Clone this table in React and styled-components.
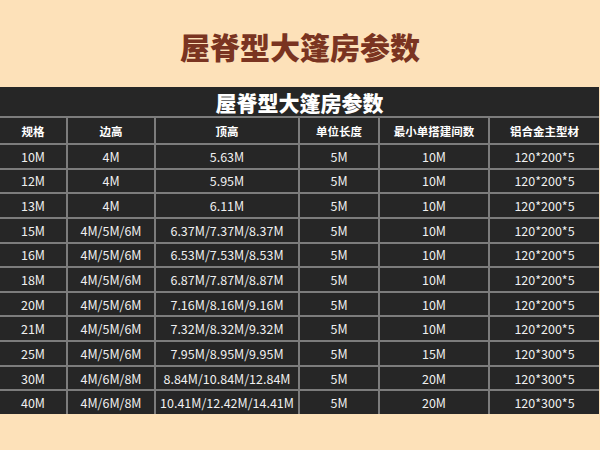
import React from "react";
import styled, { createGlobalStyle } from "styled-components";

const Global = createGlobalStyle`
  html, body { margin: 0; padding: 0; background: #fde1b9; }
  body { font-family: "Noto Sans CJK SC", "Noto Sans", sans-serif; }
`;

const Page = styled.div`
  width: 600px;
  height: 450px;
  background: #fde1b9;
  display: flex;
  flex-direction: column;
  overflow: hidden;
`;

const Heading = styled.h1`
  margin: 0;
  height: 87px;
  display: flex;
  align-items: center;
  justify-content: center;
  font-size: 30px;
  font-weight: 900;
  color: #7a3421;
  letter-spacing: 0px;
  padding-top: 4px;
  box-sizing: border-box;
`;

const Table = styled.div`
  width: 599px;
  background: #262626;
  display: flex;
  flex-direction: column;
`;

const Caption = styled.div`
  height: 29px;
  display: flex;
  align-items: center;
  justify-content: center;
  color: #ffffff;
  font-size: 21px;
  font-weight: 900;
`;

const Grid = styled.div`
  display: grid;
  grid-template-columns: 66px 86px 142px 78px 108px 1fr;
  grid-template-rows: 25px repeat(11, 1fr);
  gap: 2px;
  padding-top: 2px;
  height: 298px;
  box-sizing: border-box;
  background: #7c7c7c;
`;

const Cell = styled.div`
  background: #262626;
  color: ${(p) => (p.$head ? "#ffffff" : "#f0f0f0")};
  font-size: ${(p) => (p.$head ? "11.5px" : "12.5px")};
  font-weight: ${(p) => (p.$head ? 700 : 400)};
  display: flex;
  align-items: center;
  justify-content: center;
  white-space: nowrap;
`;

const head = ["规格", "边高", "顶高", "单位长度", "最小单搭建间数", "铝合金主型材"];
const rows = [
  ["10M", "4M", "5.63M", "5M", "10M", "120*200*5"],
  ["12M", "4M", "5.95M", "5M", "10M", "120*200*5"],
  ["13M", "4M", "6.11M", "5M", "10M", "120*200*5"],
  ["15M", "4M/5M/6M", "6.37M/7.37M/8.37M", "5M", "10M", "120*200*5"],
  ["16M", "4M/5M/6M", "6.53M/7.53M/8.53M", "5M", "10M", "120*200*5"],
  ["18M", "4M/5M/6M", "6.87M/7.87M/8.87M", "5M", "10M", "120*200*5"],
  ["20M", "4M/5M/6M", "7.16M/8.16M/9.16M", "5M", "10M", "120*200*5"],
  ["21M", "4M/5M/6M", "7.32M/8.32M/9.32M", "5M", "10M", "120*200*5"],
  ["25M", "4M/5M/6M", "7.95M/8.95M/9.95M", "5M", "15M", "120*300*5"],
  ["30M", "4M/6M/8M", "8.84M/10.84M/12.84M", "5M", "20M", "120*300*5"],
  ["40M", "4M/6M/8M", "10.41M/12.42M/14.41M", "5M", "20M", "120*300*5"],
];

export default function App() {
  return (
    <Page>
      <Global />
      <Heading>屋脊型大篷房参数</Heading>
      <Table>
        <Caption>屋脊型大篷房参数</Caption>
        <Grid>
          {head.map((h) => (
            <Cell key={h} $head>{h}</Cell>
          ))}
          {rows.map((r, i) =>
            r.map((c, j) => <Cell key={i + "-" + j}>{c}</Cell>)
          )}
        </Grid>
      </Table>
    </Page>
  );
}
